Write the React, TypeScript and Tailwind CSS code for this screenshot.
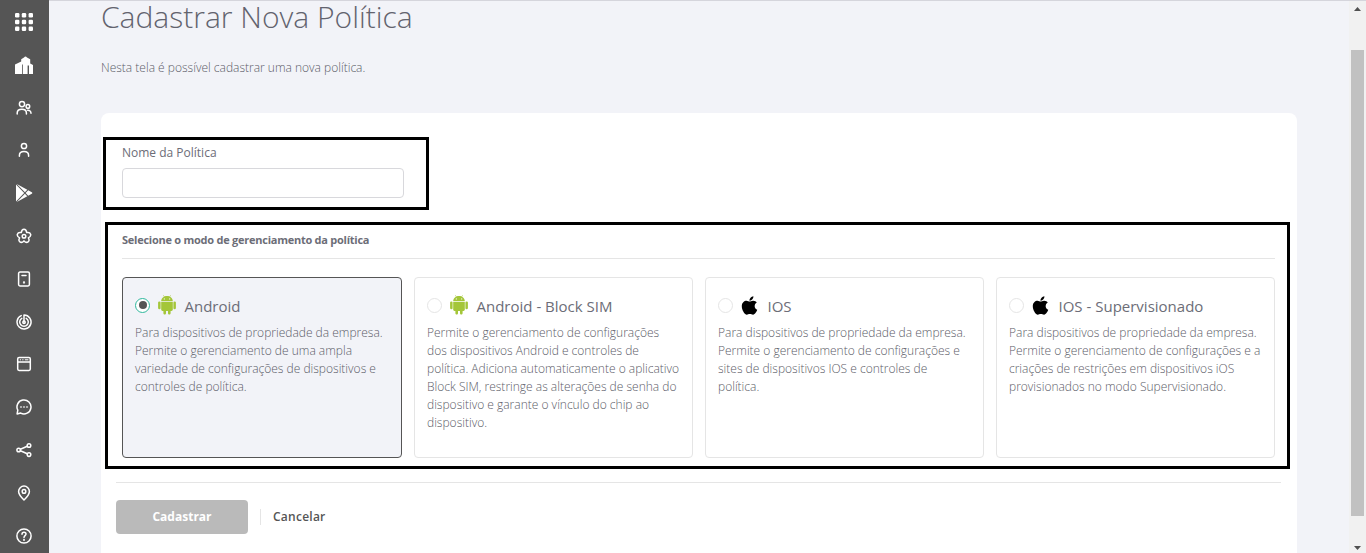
import type { ReactNode } from 'react';
import { FaApple } from 'react-icons/fa';

function Line({ children, size = 16 }: { children: ReactNode; size?: number }) {
  return (
    <svg width={size} height={size} viewBox="0 0 16 16" fill="none" stroke="white" strokeWidth="1.5" strokeLinecap="round" strokeLinejoin="round">
      {children}
    </svg>
  );
}

const icons: { name: string; icon: ReactNode }[] = [
  {
    name: 'apps',
    icon: (
      <svg width="18" height="18" viewBox="0 0 18 18" fill="white">
        {[0, 6.8, 13.6].map((y) => [0, 6.8, 13.6].map((x) => <rect key={`${x}-${y}`} x={x} y={y} width="4.4" height="4.4" rx="1.2" />))}
      </svg>
    ),
  },
  {
    name: 'company',
    icon: (
      <svg width="18" height="18" viewBox="0 0 18 18" fill="white">
        <path d="M0 18V8.4L6.2 5.5V3.2L9 1.4Q10.5 -.4 12 1.4L15.2 3.2V7.6L18 9V18H14V9.5H12.6V18H7.9V8.6H7.1V18Z" />
      </svg>
    ),
  },
  {
    name: 'groups',
    icon: (
      <Line>
        <circle cx="6" cy="4.1" r="2.6" />
        <path d="M1.2 14V13C1.2 10.8 3.2 9.3 5.9 9.3S10.4 10.8 10.4 13V14" />
        <circle cx="11.9" cy="6.4" r="1.8" />
        <path d="M11.6 10.3C13.7 10.2 15 11.4 15 13.3" />
      </Line>
    ),
  },
  {
    name: 'user',
    icon: (
      <Line>
        <circle cx="8" cy="4" r="2.6" />
        <path d="M3.4 14.2V13.4C3.4 11.1 5.4 9.6 8 9.6S12.6 11.1 12.6 13.4V14.2" />
      </Line>
    ),
  },
  {
    name: 'play',
    icon: (
      <svg width="18" height="20" viewBox="0 0 18 20" fill="white">
        <path d="M1 1.5L9.2 10L1 18.5Z" />
        <path d="M1.8 1L12.3 6.8L9.9 9.2Z" />
        <path d="M1.8 19L12.3 13.2L9.9 10.8Z" />
        <path d="M13.2 7.3L17.2 9.6V10.4L13.2 12.7L10.6 10Z" />
      </svg>
    ),
  },
  {
    name: 'settings',
    icon: (
      <Line>
        <path d="M5.3 4.6C5.9 .2 10.1 .2 10.7 4.6C14.96 3.83 16.26 7.83 12.4 9.8C14.4 13.54 11 16 8 12.9C5 16 1.6 13.54 3.6 9.8C-.26 7.83 1.04 3.83 5.3 4.6Z" />
        <circle cx="8" cy="8.2" r="1.8" />
      </Line>
    ),
  },
  {
    name: 'device',
    icon: (
      <Line>
        <rect x="2.6" y="1" width="10.8" height="14" rx="1.4" />
        <path d="M6 4.5H10" />
        <circle cx="8" cy="11.5" r=".4" fill="white" />
      </Line>
    ),
  },
  {
    name: 'radar',
    icon: (
      <Line>
        <path d="M8 8V1A7 7 0 1 1 5.2 1.6" />
        <path d="M10.2 4.3A4.3 4.3 0 1 1 5.8 4.3" />
        <circle cx="8" cy="8.2" r="1.2" />
      </Line>
    ),
  },
  {
    name: 'window',
    icon: (
      <Line>
        <rect x="1.7" y="1.5" width="12.6" height="13" rx="1.4" />
        <path d="M1.7 6H14.3" />
        <path d="M4.2 3.8H4.7M6.6 3.8H7.1M9.2 3.8H12" strokeWidth="1" />
      </Line>
    ),
  },
  {
    name: 'messages',
    icon: (
      <Line>
        <path d="M1.1 14.9L1.8 11.2A7 7 0 1 1 4.7 14.1Z" />
        <path d="M4.6 8H5.4M7.6 8H8.4M10.6 8H11.4" strokeWidth="1.5" stroke="#d8d8d8" />
      </Line>
    ),
  },
  {
    name: 'share',
    icon: (
      <Line>
        <circle cx="2.7" cy="8" r="1.8" />
        <circle cx="13" cy="3.5" r="1.8" />
        <circle cx="13" cy="12.6" r="1.8" />
        <path d="M4.4 7.3L11.3 4.3M4.4 8.8L11.3 11.8" />
      </Line>
    ),
  },
  {
    name: 'location',
    icon: (
      <Line>
        <path d="M8 15C5.5 12.6 2.6 9.8 2.6 6.5A5.4 5.4 0 0 1 13.4 6.5C13.4 9.8 10.5 12.6 8 15Z" />
        <circle cx="8" cy="6.4" r="1.8" />
      </Line>
    ),
  },
  {
    name: 'help',
    icon: (
      <Line>
        <circle cx="8" cy="8" r="7.1" />
        <path d="M6 6.3C6 5 6.9 4.2 8 4.2S10 5 10 6.1C10 7.6 8 7.7 8 9.4" />
        <circle cx="8" cy="11.9" r=".3" fill="white" />
      </Line>
    ),
  },
];

function AndroidIcon() {
  return (
    <svg width="18" height="20" viewBox="0 0 18 20" fill="#a4c639">
      <path d="M3.2 6.1C3.2 3.9 4.4 2.5 6 1.7L5.1 .3L5.4 .1L6.4 1.5C8 .9 10 .9 11.6 1.5L12.6 .1L12.9 .3L12 1.7C13.6 2.5 14.8 3.9 14.8 6.1Z" />
      <path d="M3.2 6.7H14.8V14.6C14.8 15.4 14.2 15.9 13.5 15.9H12.6V18.3C12.6 20 10 20 10 18.3V15.9H8V18.3C8 20 5.4 20 5.4 18.3V15.9H4.5C3.8 15.9 3.2 15.4 3.2 14.6Z" />
      <rect x=".1" y="6.5" width="2.5" height="7.8" rx="1.25" />
      <rect x="15.4" y="6.5" width="2.5" height="7.8" rx="1.25" />
      <circle cx="6.3" cy="3.9" r=".55" fill="white" />
      <circle cx="11.7" cy="3.9" r=".55" fill="white" />
    </svg>
  );
}

const modes = [
  { title: 'Android', apple: false, text: 'Para dispositivos de propriedade da empresa. Permite o gerenciamento de uma ampla variedade de configurações de dispositivos e controles de política.' },
  { title: 'Android - Block SIM', apple: false, text: 'Permite o gerenciamento de configurações dos dispositivos Android e controles de política. Adiciona automaticamente o aplicativo Block SIM, restringe as alterações de senha do dispositivo e garante o vínculo do chip ao dispositivo.' },
  { title: 'IOS', apple: true, text: 'Para dispositivos de propriedade da empresa. Permite o gerenciamento de configurações e sites de dispositivos IOS e controles de política.' },
  { title: 'IOS - Supervisionado', apple: true, text: 'Para dispositivos de propriedade da empresa. Permite o gerenciamento de configurações e a criações de restrições em dispositivos iOS provisionados no modo Supervisionado.' },
];

function ModeCard({ title, text, apple, selected }: { title: string; text: string; apple: boolean; selected: boolean }) {
  return (
    <div className={`h-[181px] rounded-[4px] border px-3 pt-4 ${selected ? 'border-[#555] bg-[#f2f3f8]' : 'border-[#e5e5e5] bg-white'}`}>
      <div className="flex h-[22px] items-center">
        <span className={`flex size-[15px] shrink-0 items-center justify-center rounded-full border bg-white ${selected ? 'border-[#2fb89d]' : 'border-[#e5e5e5]'}`}>
          {selected && <span className="size-[8px] rounded-full bg-[#555]" />}
        </span>
        <span className="ml-2 flex w-[18.5px] justify-center">{apple ? <FaApple size={21} color="black" className="mr-px shrink-0" /> : <AndroidIcon />}</span>
        <span className="ml-[8px] mt-[2px] text-[15px] leading-5 whitespace-nowrap">{title}</span>
      </div>
      <p className="mt-2 text-[12px] leading-[18px] font-light text-[#5c5d68]">{text}</p>
    </div>
  );
}

export default function App() {
  return (
    <div className="flex h-[553px] w-[1366px] overflow-hidden bg-[#f2f3f8] font-['Open_Sans',sans-serif] text-[#6c6d77]">
      <nav className="flex w-[49px] shrink-0 flex-col items-center bg-[#555] pt-[0.6px] pr-px">
        {icons.map(({ name, icon }) => (
          <div key={name} className="flex h-[42.8px] shrink-0 items-center justify-center">
            {icon}
          </div>
        ))}
      </nav>
      <div className="flex min-w-0 grow flex-col border-t border-[#d5d5dc]">
        <div className="flex min-h-0 grow">
          <main className="flex w-[1300px] shrink-0 flex-col pr-[52px] pl-[52px]">
            <h1 className="h-9 text-[30px] leading-8 font-light whitespace-nowrap text-[#62636e]">Cadastrar Nova Política</h1>
            <p className="mt-[22px] h-[18px] text-[12px] leading-[18px] font-light text-[#5c5d68]">Nesta tela é possível cadastrar uma nova política.</p>
            <section className="mt-[36px] w-[1196px] grow rounded-t-lg bg-white pt-6">
              <div className="ml-[2px] h-[73px] w-[326px] border-[3px] border-black pl-4 pt-1">
                <label htmlFor="policy" className="block text-[12px] leading-[18px]">Nome da Política</label>
                <input id="policy" className="mt-[6px] block h-[30px] w-[282px] rounded-[4px] border border-[#d8d8dc] bg-white" />
              </div>
              <div className="mt-3 ml-1 h-[247px] w-[1185px] border-[3px] border-black pt-[6px] pr-3 pl-[14px]">
                <h2 className="h-[28px] border-b border-[#e5e5e5] text-[11px] leading-[18px] font-bold tracking-[-0.25px]">Selecione o modo de gerenciamento da política</h2>
                <div className="mt-[18px] grid grid-cols-[280px_279px_279px_279px] gap-3">
                  {modes.map((m, i) => (
                    <ModeCard key={m.title} {...m} selected={i === 0} />
                  ))}
                </div>
              </div>
              <div className="mt-[13px] ml-[15px] flex w-[1165px] items-center border-t border-[#e5e5e5] pt-[17px]">
                <button className="h-[34px] w-[132px] rounded-[4px] bg-[#bababa] text-[12px] font-bold text-white">Cadastrar</button>
                <span className="ml-3 h-4 w-px bg-[#e5e5e5]" />
                <button className="ml-3 text-[12px] font-semibold tracking-[0.25px] text-[#555]">Cancelar</button>
              </div>
            </section>
          </main>
          <div className="flex w-[17px] shrink-0 flex-col items-center bg-[#f1f1f1] pt-[6px]">
            <svg width="7" height="4" viewBox="0 0 7 4" fill="#505050"><path d="M3.5 0L7 4H0Z" /></svg>
            <div className="mt-[39px] h-[466px] w-[13px] bg-[#c1c1c1]" />
            <svg className="mt-[30px]" width="7" height="4" viewBox="0 0 7 4" fill="#505050"><path d="M0 0H7L3.5 4Z" /></svg>
          </div>
        </div>
      </div>
    </div>
  );
}
